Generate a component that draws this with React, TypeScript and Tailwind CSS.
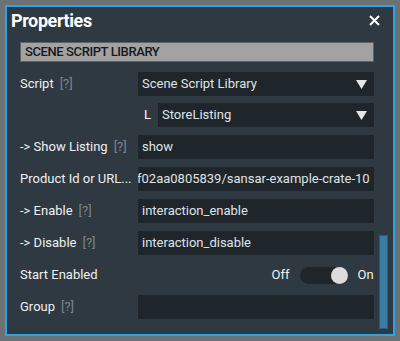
const Help = () => <span className="text-[#7c858b] ml-[6px]">[?]</span>;

const Arrow = () => (
  <svg width="11" height="9" viewBox="0 0 11 9" className="shrink-0">
    <polygon points="0,0 11,0 5.5,9" fill="#e4e6e8" />
  </svg>
);

const Field = ({ children, className = "" }: { children?: React.ReactNode; className?: string }) => (
  <div className={"h-[24px] bg-[#1f262b] flex items-center px-[4px] overflow-hidden whitespace-nowrap text-[#dfe3e6] " + className}>
    {children}
  </div>
);

const Row = ({ label, children }: { label: React.ReactNode; children?: React.ReactNode }) => (
  <div className="flex items-center h-[24px]">
    <div className="w-[118px] shrink-0 whitespace-nowrap text-[#eef0f1]">{label}</div>
    <div className="flex-1 min-w-0">{children}</div>
  </div>
);

export default function App() {
  return (
    <div className="w-[400px] h-[341px] bg-[#6c7173] pt-[5px] pl-[5px] overflow-hidden" style={{ fontFamily: "Roboto, 'Noto Sans', sans-serif" }}>
      <div className="w-[390px] h-[331px] border-2 border-[#2ea2e4] bg-[#2e3941] flex flex-col">
        <div className="flex items-center justify-between h-[27px] pl-[4px] pr-[13px]">
          <span className="text-[18px] font-bold text-white tracking-[-0.4px]">Properties</span>
          <svg width="11" height="11" viewBox="0 0 11 11">
            <path d="M1 1 L10 10 M10 1 L1 10" stroke="#ffffff" strokeWidth="2" />
          </svg>
        </div>
        <div className="flex flex-1 min-h-0">
          <div className="flex-1 pl-[13px] pr-[4px] pt-[8px] flex flex-col text-[13px]">
            <div className="h-[20px] bg-[#a2a2a2] border border-[#5d6469] flex items-center pl-[4px] text-[#16191b] text-[13px] font-medium tracking-[-0.4px]">
              SCENE SCRIPT LIBRARY
            </div>
            <div className="flex flex-col gap-[8px] mt-[10px]">
              <Row label={<>Script<Help /></>}>
                <Field className="justify-between pr-[7px]">
                  <span>Scene Script Library</span>
                  <Arrow />
                </Field>
              </Row>
              <div className="flex items-center h-[24px] -mt-[1px]">
                <div className="w-[138px] shrink-0 flex justify-end pr-[7px] text-white">L</div>
                <Field className="flex-1 justify-between pr-[7px]">
                  <span>StoreListing</span>
                  <Arrow />
                </Field>
              </div>
              <Row label={<>-&gt; Show Listing<Help /></>}>
                <Field>show</Field>
              </Row>
              <Row label="Product Id or URL...">
                <Field>
                  <span className="-ml-[5px]">f02aa0805839/sansar-example-crate-10</span>
                </Field>
              </Row>
              <Row label={<>-&gt; Enable<Help /></>}>
                <Field>interaction_enable</Field>
              </Row>
              <Row label={<>-&gt; Disable<Help /></>}>
                <Field>interaction_disable</Field>
              </Row>
              <Row label="Start Enabled">
                <div className="flex items-center justify-end gap-[10px] text-[#eef0f1]">
                  <span>Off</span>
                  <div className="w-[48px] h-[17px] rounded-full bg-[#1f262b] flex items-center justify-end">
                    <div className="w-[17px] h-[17px] rounded-full bg-[#dcdcdc]" />
                  </div>
                  <span>On</span>
                </div>
              </Row>
              <Row label={<>Group<Help /></>}>
                <Field />
              </Row>
            </div>
          </div>
          <div className="w-[16px] shrink-0 flex flex-col pl-[1px] pt-[201px] pb-[5px]">
            <div className="w-[9px] flex-1 bg-[#3a7ca6] border border-[#2a5d7f]" />
          </div>
        </div>
      </div>
    </div>
  );
}
